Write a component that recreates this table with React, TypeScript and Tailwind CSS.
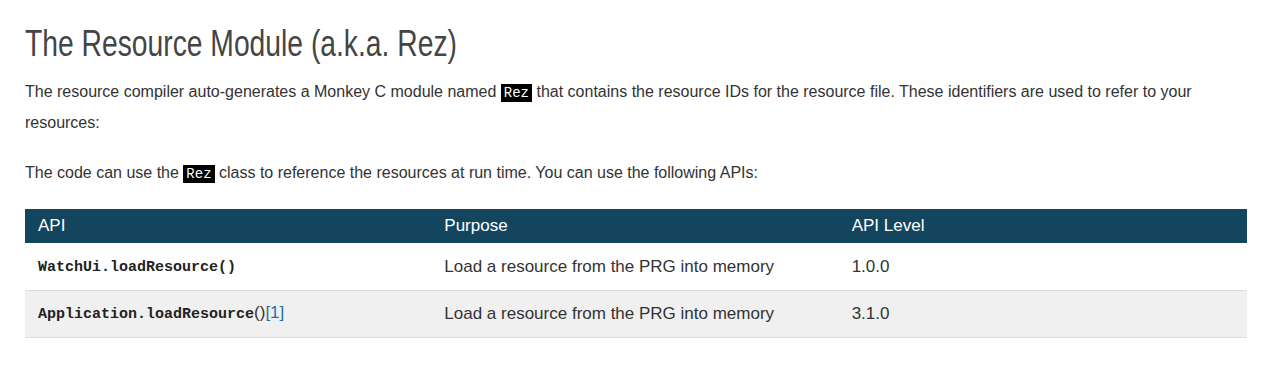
import React from "react";

const Code = ({ children }: { children: React.ReactNode }) => (
  <code className="bg-black text-white px-[3px] py-[1px] text-[14px] font-['Liberation_Mono',monospace]">
    {children}
  </code>
);

const rows = [
  { api: "WatchUi.loadResource()", tail: null, purpose: "Load a resource from the PRG into memory", level: "1.0.0" },
  { api: "Application.loadResource", tail: "()", purpose: "Load a resource from the PRG into memory", level: "3.1.0" },
];

export default function App() {
  return (
    <div className="min-h-[371px] bg-white pl-[25px] pr-[33px] pt-[24px] font-['Liberation_Sans',Arial,sans-serif] text-[#333]">
      <h1 className="origin-left scale-x-[0.785] whitespace-nowrap text-[36px] leading-[40px] text-[#454545]">
        The Resource Module (a.k.a. Rez)
      </h1>

      <p className="mt-[13px] text-[16px] leading-[30px]">
        The resource compiler auto-generates a Monkey C module named <Code>Rez</Code> that contains the resource IDs for
        the resource file. These identifiers are used to refer to your resources:
      </p>

      <p className="mt-[20px] text-[16px] leading-[30px]">
        The code can use the <Code>Rez</Code> class to reference the resources at run time. You can use the following
        APIs:
      </p>

      <table className="mt-[20px] w-full table-fixed border-collapse text-[17px]">
        <thead>
          <tr className="bg-[#13455f] text-white">
            <th className="h-[34px] px-[13px] text-left font-normal">API</th>
            <th className="px-[12px] text-left font-normal">Purpose</th>
            <th className="px-[12px] text-left font-normal">API Level</th>
          </tr>
        </thead>
        <tbody>
          {rows.map((r, i) => (
            <tr key={r.api} className={`border-b border-[#dcdcdc] ${i % 2 ? "bg-[#f0f0f0]" : "bg-white"}`}>
              <td className="h-[47px] px-[13px]">
                <span className="font-['Liberation_Mono',monospace] text-[15px] font-bold text-[#222]">{r.api}</span>
                {r.tail && (
                  <>
                    <span>{r.tail}</span>
                    <a className="text-[#1f6ea8]">[1]</a>
                  </>
                )}
              </td>
              <td className="px-[12px] text-[#333]">{r.purpose}</td>
              <td className="px-[12px] text-[#333]">{r.level}</td>
            </tr>
          ))}
        </tbody>
      </table>
    </div>
  );
}
